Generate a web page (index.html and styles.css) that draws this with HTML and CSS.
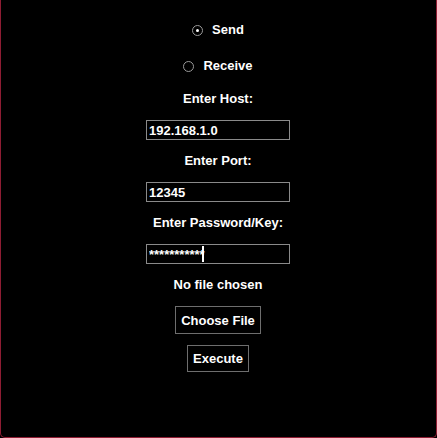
FILE: index.html
```html
<!DOCTYPE html>
<html>
<head>
<meta charset="utf-8">
<link rel="stylesheet" href="styles.css">
</head>
<body>
<div class="frame">
  <div class="radio-row first"><span class="radio checked"></span><span>Send</span></div>
  <div class="radio-row second"><span class="radio"></span><span>Receive</span></div>
  <div class="label gap-lg">Enter Host:</div>
  <input class="field" type="text" value="192.168.1.0">
  <div class="label">Enter Port:</div>
  <input class="field" type="text" value="12345">
  <div class="label">Enter Password/Key:</div>
  <div class="field-wrap">
    <input class="field" type="text" value="***********">
    <span class="caret"></span>
  </div>
  <div class="label">No file chosen</div>
  <button class="btn">Choose File</button>
  <button class="btn exec">Execute</button>
</div>
</body>
</html>
```
FILE: styles.css
```css
html, body {
  margin: 0;
  padding: 0;
  background: #000;
}
.frame {
  box-sizing: border-box;
  width: 437px;
  height: 438px;
  border: 1px solid #8e1d33;
  border-top: none;
  border-radius: 0 0 5px 5px;
  background: #000;
  display: flex;
  flex-direction: column;
  align-items: center;
  gap: 13px;
  padding-top: 22px;
  padding-right: 1px;
  font-family: "Liberation Sans", Arial, sans-serif;
  font-weight: bold;
  font-size: 13px;
  color: #fff;
}
.radio-row {
  height: 16px;
  line-height: 16px;
  display: flex;
  align-items: center;
  gap: 9px;
}
.second { margin-top: 7px; }
.radio {
  box-sizing: border-box;
  width: 11px;
  height: 11px;
  border: 1px solid #9a9a9a;
  border-radius: 50%;
  position: relative;
}
.radio.checked::after {
  content: "";
  position: absolute;
  left: 3px;
  top: 3px;
  width: 3px;
  height: 3px;
  border-radius: 50%;
  background: #fff;
}
.label {
  height: 16px;
  line-height: 16px;
}
.gap-lg { margin-top: 4px; }
.field-wrap {
  position: relative;
  height: 20px;
}
.field {
  box-sizing: border-box;
  width: 144px;
  height: 20px;
  margin: 0;
  padding: 0 2px;
  background: #000;
  border: 1px solid #8a8a8a;
  color: #fff;
  font-family: "Liberation Sans", Arial, sans-serif;
  font-weight: bold;
  font-size: 13px;
  outline: none;
}
.caret {
  position: absolute;
  left: 56px;
  top: 2px;
  width: 2px;
  height: 16px;
  background: #fff;
}
.btn {
  box-sizing: border-box;
  height: 28px;
  margin: 0;
  padding: 0 5px;
  background: #000;
  border: 1px solid #6e6e6e;
  color: #fff;
  font-family: "Liberation Sans", Arial, sans-serif;
  font-weight: bold;
  font-size: 13px;
}
.exec {
  margin-top: -2px;
  height: 27px;
}
```
